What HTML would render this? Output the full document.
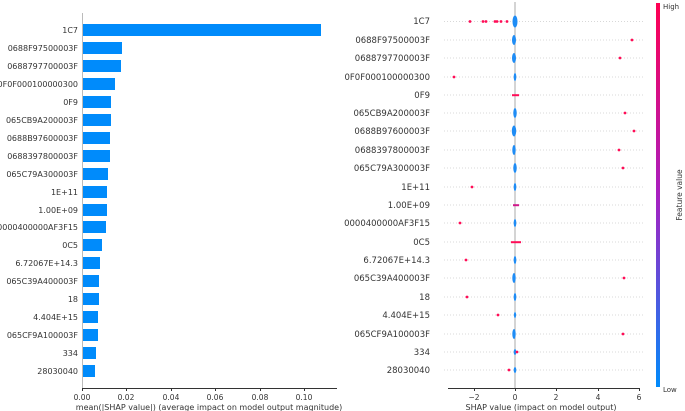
<!DOCTYPE html>
<html><head><style>
html,body{margin:0;padding:0;background:#fff;}
svg{display:block;font-family:"DejaVu Sans","Liberation Sans",sans-serif;}
</style></head><body>
<svg width="685" height="411" viewBox="0 0 685 411" xmlns="http://www.w3.org/2000/svg">
<defs>
<linearGradient id="cb" x1="0" y1="0" x2="0" y2="1">
<stop offset="0" stop-color="#ff0052"/><stop offset="0.5" stop-color="#a81fc0"/><stop offset="1" stop-color="#008bfb"/>
</linearGradient>
</defs>
<g font-size="8" fill="#333" text-anchor="end">
<text x="78" y="33">1C7</text><text x="78" y="51">0688F97500003F</text><text x="78" y="69">0688797700003F</text><text x="78" y="87">0F0F000100000300</text><text x="78" y="105">0F9</text><text x="78" y="123">065CB9A200003F</text><text x="78" y="141">0688B97600003F</text><text x="78" y="159">0688397800003F</text><text x="78" y="177">065C79A300003F</text><text x="78" y="195">1E+11</text><text x="78" y="213">1.00E+09</text><text x="78" y="230">0000400000AF3F15</text><text x="78" y="248">0C5</text><text x="78" y="266">6.72067E+14.3</text><text x="78" y="284">065C39A400003F</text><text x="78" y="302">18</text><text x="78" y="320">4.404E+15</text><text x="78" y="338">065CF9A100003F</text><text x="78" y="356">334</text><text x="78" y="374">28030040</text>
</g>
<g fill="#008bfb">
<rect x="83" y="24" width="238" height="12"/><rect x="83" y="42" width="39" height="12"/><rect x="83" y="60" width="38" height="12"/><rect x="83" y="78" width="32" height="12"/><rect x="83" y="96" width="28" height="12"/><rect x="83" y="114" width="28" height="12"/><rect x="83" y="132" width="27" height="12"/><rect x="83" y="150" width="27" height="12"/><rect x="83" y="168" width="25" height="12"/><rect x="83" y="186" width="24" height="12"/><rect x="83" y="204" width="24" height="12"/><rect x="83" y="221" width="23" height="12"/><rect x="83" y="239" width="19" height="12"/><rect x="83" y="257" width="17" height="12"/><rect x="83" y="275" width="16" height="12"/><rect x="83" y="293" width="16" height="12"/><rect x="83" y="311" width="15" height="12"/><rect x="83" y="329" width="15" height="12"/><rect x="83" y="347" width="13" height="12"/><rect x="83" y="365" width="12" height="12"/>
</g>
<line x1="82.5" y1="13" x2="82.5" y2="388" stroke="#bbb"/>
<line x1="82" y1="388.5" x2="337" y2="388.5" stroke="#333"/>
<g stroke="#333"><line x1="82.5" y1="388" x2="82.5" y2="391"/><line x1="126.5" y1="388" x2="126.5" y2="391"/><line x1="171.5" y1="388" x2="171.5" y2="391"/><line x1="215.5" y1="388" x2="215.5" y2="391"/><line x1="260.5" y1="388" x2="260.5" y2="391"/><line x1="304.5" y1="388" x2="304.5" y2="391"/></g>
<g font-size="7.5" fill="#333" text-anchor="middle"><text x="82" y="400">0.00</text><text x="126" y="400">0.02</text><text x="171" y="400">0.04</text><text x="215" y="400">0.06</text><text x="260" y="400">0.08</text><text x="304" y="400">0.10</text></g>
<text x="209" y="410" font-size="8" fill="#333" text-anchor="middle">mean(|SHAP value|) (average impact on model output magnitude)</text>

<g font-size="8.5" fill="#333" text-anchor="end">
<text x="430" y="24">1C7</text><text x="430" y="43">0688F97500003F</text><text x="430" y="61">0688797700003F</text><text x="430" y="80">0F0F000100000300</text><text x="430" y="98">0F9</text><text x="430" y="116">065CB9A200003F</text><text x="430" y="134">0688B97600003F</text><text x="430" y="153">0688397800003F</text><text x="430" y="171">065C79A300003F</text><text x="430" y="190">1E+11</text><text x="430" y="208">1.00E+09</text><text x="430" y="226">0000400000AF3F15</text><text x="430" y="245">0C5</text><text x="430" y="263">6.72067E+14.3</text><text x="430" y="281">065C39A400003F</text><text x="430" y="300">18</text><text x="430" y="318">4.404E+15</text><text x="430" y="337">065CF9A100003F</text><text x="430" y="355">334</text><text x="430" y="373">28030040</text>
</g>
<g stroke="#ccc" stroke-dasharray="1,2" stroke-width="0.8">
<line x1="444" y1="21.5" x2="643" y2="21.5"/><line x1="444" y1="40" x2="643" y2="40"/><line x1="444" y1="58" x2="643" y2="58"/><line x1="444" y1="77" x2="643" y2="77"/><line x1="444" y1="95" x2="643" y2="95"/><line x1="444" y1="113" x2="643" y2="113"/><line x1="444" y1="131" x2="643" y2="131"/><line x1="444" y1="150" x2="643" y2="150"/><line x1="444" y1="168" x2="643" y2="168"/><line x1="444" y1="187" x2="643" y2="187"/><line x1="444" y1="205" x2="643" y2="205"/><line x1="444" y1="223" x2="643" y2="223"/><line x1="444" y1="242" x2="643" y2="242"/><line x1="444" y1="260" x2="643" y2="260"/><line x1="444" y1="278" x2="643" y2="278"/><line x1="444" y1="297" x2="643" y2="297"/><line x1="444" y1="315" x2="643" y2="315"/><line x1="444" y1="334" x2="643" y2="334"/><line x1="444" y1="352" x2="643" y2="352"/><line x1="444" y1="370" x2="643" y2="370"/>
</g>
<line x1="515" y1="2" x2="515" y2="388" stroke="#aaa" stroke-width="1"/>
<g fill="#1e8cf5">
<ellipse cx="515" cy="21.5" rx="2.5" ry="6"/><ellipse cx="514" cy="40" rx="2" ry="5"/><ellipse cx="514" cy="58" rx="2" ry="5"/><ellipse cx="515" cy="77" rx="1.3" ry="4"/><ellipse cx="515" cy="113" rx="1.7" ry="5"/><ellipse cx="514" cy="131" rx="2.2" ry="5.5"/><ellipse cx="514" cy="150" rx="1.7" ry="5"/><ellipse cx="515" cy="168" rx="1.7" ry="5"/><ellipse cx="515" cy="187" rx="1.3" ry="4"/><ellipse cx="515" cy="223" rx="1.3" ry="4"/><ellipse cx="515" cy="260" rx="1.3" ry="4"/><ellipse cx="514" cy="278" rx="1.7" ry="5"/><ellipse cx="515" cy="297" rx="1.3" ry="4"/><ellipse cx="515" cy="315" rx="1.1" ry="3"/><ellipse cx="514" cy="334" rx="1.7" ry="5"/><ellipse cx="515" cy="352" rx="1.3" ry="3"/><ellipse cx="515" cy="370" rx="1.3" ry="3"/>
</g>
<g fill="#ff0d57">
<rect x="512" y="94.2" width="7" height="2"/><rect x="511" y="241.2" width="10" height="2"/><rect x="513" y="204.2" width="6" height="2" fill="#d0188a"/>
<circle cx="470" cy="21.5" r="1.4"/><circle cx="483" cy="21.5" r="1.4"/><circle cx="486" cy="21.5" r="1.4"/><circle cx="495" cy="21.5" r="1.4"/><circle cx="497" cy="21.5" r="1.4"/><circle cx="501" cy="21.5" r="1.4"/><circle cx="507" cy="21.5" r="1.4"/>
<circle cx="632" cy="40" r="1.4"/><circle cx="620" cy="58" r="1.4"/><circle cx="454" cy="77" r="1.4"/><circle cx="625" cy="113" r="1.4"/><circle cx="634" cy="131" r="1.4"/><circle cx="619" cy="150" r="1.4"/><circle cx="623" cy="168" r="1.4"/><circle cx="472" cy="187" r="1.4"/><circle cx="460" cy="223" r="1.4"/><circle cx="466" cy="260" r="1.4"/><circle cx="624" cy="278" r="1.4"/><circle cx="467" cy="297" r="1.4"/><circle cx="498" cy="315" r="1.4"/><circle cx="623" cy="334" r="1.4"/><circle cx="517" cy="352" r="1.4"/><circle cx="509" cy="370" r="1.4"/>
</g>
<line x1="448" y1="388.5" x2="640" y2="388.5" stroke="#333"/>
<g stroke="#333"><line x1="474.5" y1="388" x2="474.5" y2="391"/><line x1="515.5" y1="388" x2="515.5" y2="391"/><line x1="556.5" y1="388" x2="556.5" y2="391"/><line x1="598.5" y1="388" x2="598.5" y2="391"/><line x1="639.5" y1="388" x2="639.5" y2="391"/></g>
<g font-size="7.5" fill="#333" text-anchor="middle"><text x="474" y="400">−2</text><text x="515" y="400">0</text><text x="556" y="400">2</text><text x="598" y="400">4</text><text x="639" y="400">6</text></g>
<text x="541" y="410" font-size="8" fill="#333" text-anchor="middle">SHAP value (impact on model output)</text>
<rect x="656" y="3" width="4" height="384" fill="url(#cb)"/>
<text x="663" y="9" font-size="7" fill="#333">High</text>
<text x="663" y="392" font-size="7" fill="#333">Low</text>
<text transform="translate(682,195) rotate(-90)" font-size="7.5" fill="#333" text-anchor="middle">Feature value</text>
</svg>
</body></html>
